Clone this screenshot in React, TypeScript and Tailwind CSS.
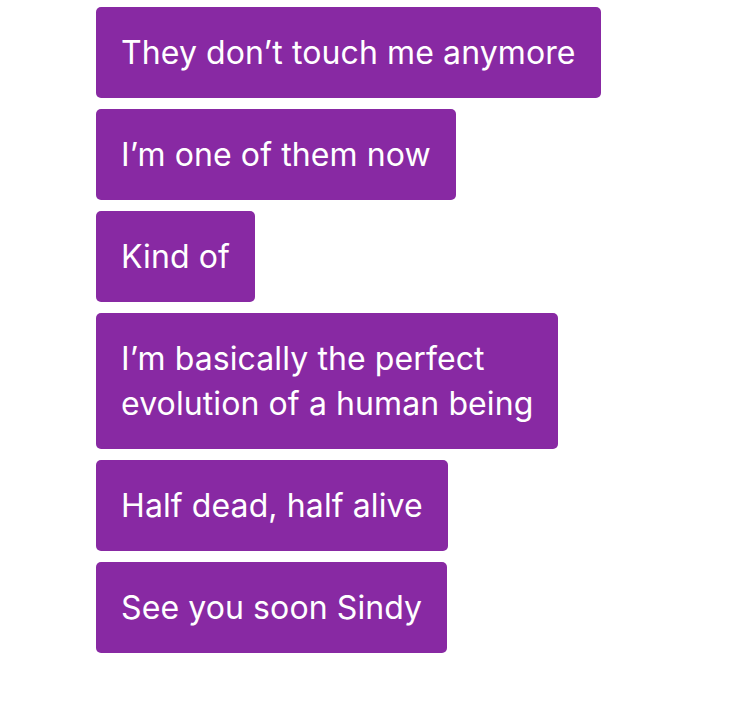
import React from 'react';

const messages: React.ReactNode[] = [
  'They don’t touch me anymore',
  'I’m one of them now',
  'Kind of',
  <>
    I’m basically the perfect
    <br />
    evolution of a human being
  </>,
  'Half dead, half alive',
  'See you soon Sindy',
];

const App: React.FC = () => {
  return (
    <div className="min-h-screen bg-white pt-[7px] pl-[96px]" style={{ fontFamily: 'Inter, "Noto Sans", sans-serif' }}>
      <div className="flex flex-col items-start gap-[11px]">
        {messages.map((m, i) => (
          <div
            key={i}
            className="rounded-[5px] bg-[#8829a3] px-[25px] py-[23px] text-[32px] leading-[45px] text-white whitespace-nowrap tracking-[0.1px]"
          >
            {m}
          </div>
        ))}
      </div>
    </div>
  );
};

export default App;
